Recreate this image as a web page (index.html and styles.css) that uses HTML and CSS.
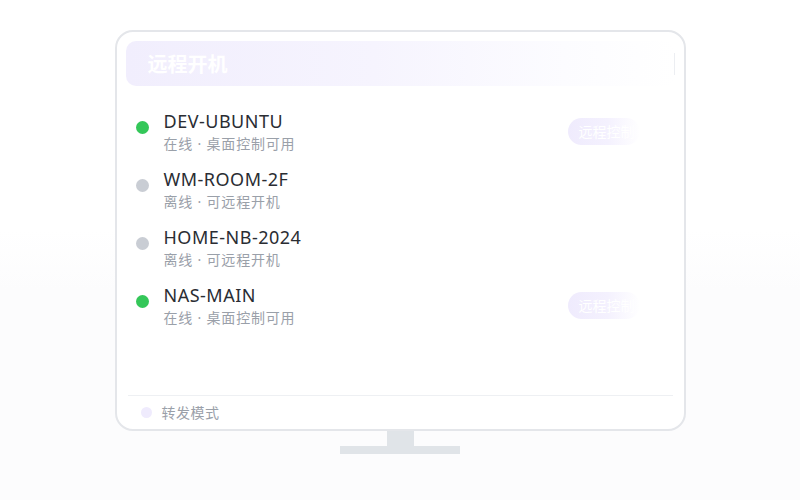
FILE: index.html
```html
<!DOCTYPE html>
<html lang="zh-CN">
<head>
    <meta charset="UTF-8">
    <meta name="viewport" content="width=device-width, initial-scale=1.0">
    <title>远程开机</title>
    <link rel="stylesheet" href="styles.css">
</head>
<body>

    <!-- Monitor -->
    <div class="monitor">
        <div class="screen">
            <!-- Header -->
            <div class="header">
                <h2>远程开机</h2>
                <span class="header-line"></span>
            </div>

            <!-- Device list -->
            <ul class="device-list">
                <li class="device">
                    <span class="dot online"></span>
                    <div class="info">
                        <div class="name">DEV-UBUNTU</div>
                        <div class="status">在线 · 桌面控制可用</div>
                    </div>
                    <button class="control-btn">远程控制</button>
                </li>
                <li class="device">
                    <span class="dot"></span>
                    <div class="info">
                        <div class="name">WM-ROOM-2F</div>
                        <div class="status">离线 · 可远程开机</div>
                    </div>
                </li>
                <li class="device">
                    <span class="dot"></span>
                    <div class="info">
                        <div class="name">HOME-NB-2024</div>
                        <div class="status">离线 · 可远程开机</div>
                    </div>
                </li>
                <li class="device">
                    <span class="dot online"></span>
                    <div class="info">
                        <div class="name">NAS-MAIN</div>
                        <div class="status">在线 · 桌面控制可用</div>
                    </div>
                    <button class="control-btn">远程控制</button>
                </li>
            </ul>

            <!-- Footer -->
            <div class="footer">
                <span class="mode-dot"></span>
                <span>转发模式</span>
            </div>
        </div>
    </div>

    <!-- Stand -->
    <div class="neck"></div>
    <div class="base"></div>

</body>
</html>
```

FILE: styles.css
```css
* {
    margin: 0;
    padding: 0;
    box-sizing: border-box;
    font-family: "Noto Sans", "Noto Sans CJK SC", sans-serif;
}

body {
    height: 500px;
    overflow: hidden;
    background: linear-gradient(#ffffff 0, #ffffff 46%, #fcfcfd 58%, #fcfcfd 100%);
    display: flex;
    flex-direction: column;
    align-items: center;
    padding-top: 30px;
}

.monitor {
    width: 571px;
    height: 401px;
    border: 2px solid #e4e6ea;
    border-radius: 18px;
    background: white;
    padding: 9px 9px 0 9px;
}

.screen {
    height: 100%;
    display: flex;
    flex-direction: column;
}

.header {
    height: 45px;
    border-radius: 10px;
    background: linear-gradient(90deg, #f1eefd 0%, #f6f4fe 45%, #fcfcff 80%, #ffffff 100%);
    display: flex;
    align-items: center;
    justify-content: space-between;
    padding-left: 22px;
}

.header h2 {
    color: white;
    font-size: 20px;
    font-weight: 700;
}

.header-line {
    width: 1px;
    height: 22px;
    background-color: #eceef2;
}

.device-list {
    list-style: none;
    flex: 1;
    padding: 22px 0 0 10px;
    display: flex;
    flex-direction: column;
    gap: 12px;
}

.device {
    display: flex;
    align-items: center;
}

.dot {
    width: 13px;
    height: 13px;
    border-radius: 50%;
    background-color: #c9cdd4;
    align-self: flex-start;
    margin-top: 13px;
    margin-right: 15px;
}

.dot.online {
    background-color: #34c759;
}

.info {
    flex: 1;
}

.name {
    font-size: 18px;
    line-height: 26px;
    color: #2a2d33;
    letter-spacing: 0.5px;
}

.status {
    font-size: 14px;
    line-height: 20px;
    color: #9aa0a9;
    letter-spacing: 0.8px;
}

.control-btn {
    width: 72px;
    height: 27px;
    margin-right: 35px;
    border: none;
    border-radius: 14px;
    background: linear-gradient(90deg, #efebfd 0%, #f4f1fe 55%, rgba(255, 255, 255, 0) 100%);
    color: white;
    font-size: 14px;
    text-align: left;
    padding-left: 11px;
    white-space: nowrap;
    overflow: hidden;
}

.footer {
    height: 33px;
    margin: 0 2px 1px 2px;
    border-top: 1px solid #eef0f3;
    display: flex;
    align-items: center;
    padding-left: 13px;
    font-size: 14px;
    color: #9aa0a9;
    letter-spacing: 0.5px;
}

.mode-dot {
    width: 11px;
    height: 11px;
    border-radius: 50%;
    background-color: #efebfd;
    margin-right: 10px;
}

.neck {
    width: 27px;
    height: 15px;
    background-color: #e0e4e8;
}

.base {
    width: 120px;
    height: 8px;
    background-color: #e0e4e8;
}
```
